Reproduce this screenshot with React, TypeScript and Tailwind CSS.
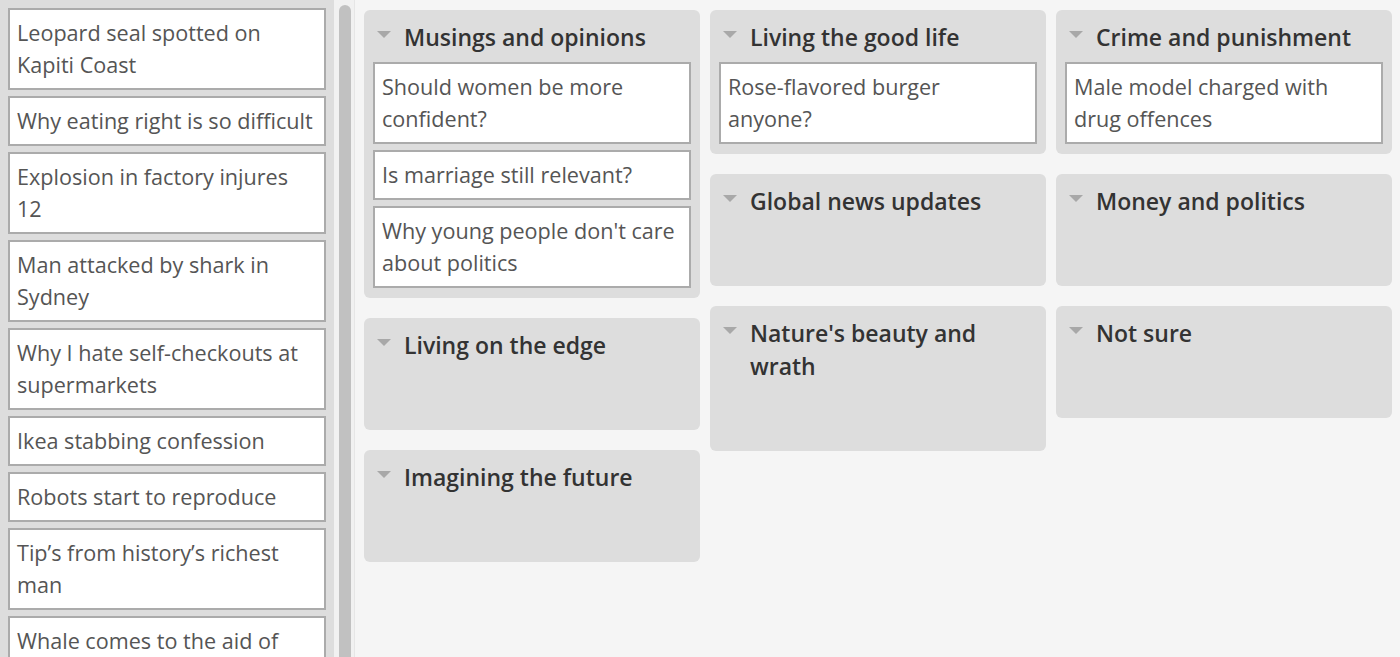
import React from "react";

const leftItems = [
  "Leopard seal spotted on Kapiti Coast",
  "Why eating right is so difficult",
  "Explosion in factory injures 12",
  "Man attacked by shark in Sydney",
  "Why I hate self-checkouts at supermarkets",
  "Ikea stabbing confession",
  "Robots start to reproduce",
  "Tip\u2019s from history\u2019s richest man",
  "Whale comes to the aid of drowning surfer",
];

type Group = { title: string; items: string[] };

const columns: Group[][] = [
  [
    {
      title: "Musings and opinions",
      items: [
        "Should women be more confident?",
        "Is marriage still relevant?",
        "Why young people don't care about politics",
      ],
    },
    { title: "Living on the edge", items: [] },
    { title: "Imagining the future", items: [] },
  ],
  [
    { title: "Living the good life", items: ["Rose-flavored burger anyone?"] },
    { title: "Global news updates", items: [] },
    { title: "Nature's beauty and wrath", items: [] },
  ],
  [
    { title: "Crime and punishment", items: ["Male model charged with drug offences"] },
    { title: "Money and politics", items: [] },
    { title: "Not sure", items: [] },
  ],
];

function Card({ text }: { text: string }) {
  return (
    <div className="shrink-0 border-2 border-[#ababab] bg-white px-[7px] py-[7px] text-[21.6px] leading-[32px] text-[#555555]">
      {text}
    </div>
  );
}

function Panel({ group }: { group: Group }) {
  return (
    <div className="rounded-[6px] bg-[#dddddd] px-[9px] pt-[11px] pb-[10px]">
      <div className="flex items-start">
        <svg width="14" height="8" viewBox="0 0 14 8" className="ml-[4px] mt-[10px] shrink-0">
          <polygon points="0,0 14,0 7,7" fill="#a8a8a8" />
        </svg>
        <div className="ml-[13px] text-[23px] leading-[33px] font-semibold text-[#333333]">
          {group.title}
        </div>
      </div>
      <div className="mt-[8px] flex min-h-[50px] flex-col gap-[6px]">
        {group.items.map((t) => (
          <Card key={t} text={t} />
        ))}
      </div>
    </div>
  );
}

export default function App() {
  return (
    <div
      className="flex h-[657px] w-[1400px] overflow-hidden bg-[#f5f5f5]"
      style={{ fontFamily: '"Open Sans", "Noto Sans", sans-serif' }}
    >
      <div className="flex w-[334px] shrink-0 flex-col gap-[6px] overflow-hidden bg-[#dddddd] p-[8px]">
        {leftItems.map((t) => (
          <Card key={t} text={t} />
        ))}
      </div>
      <div className="flex w-[21px] shrink-0 flex-col border-r border-[#e6e6e6] bg-[#f1f1f1] pt-[5px] pl-[5px] pr-[3px]">
        <div className="flex-1 rounded-t-full bg-[#c1c1c1]" />
      </div>
      <div className="grid flex-1 grid-cols-3 content-start gap-[10px] pt-[10px] pl-[9px] pr-[8px]">
        {columns.map((col, i) => (
          <div key={i} className="flex flex-col gap-[20px]">
            {col.map((g) => (
              <Panel key={g.title} group={g} />
            ))}
          </div>
        ))}
      </div>
    </div>
  );
}
